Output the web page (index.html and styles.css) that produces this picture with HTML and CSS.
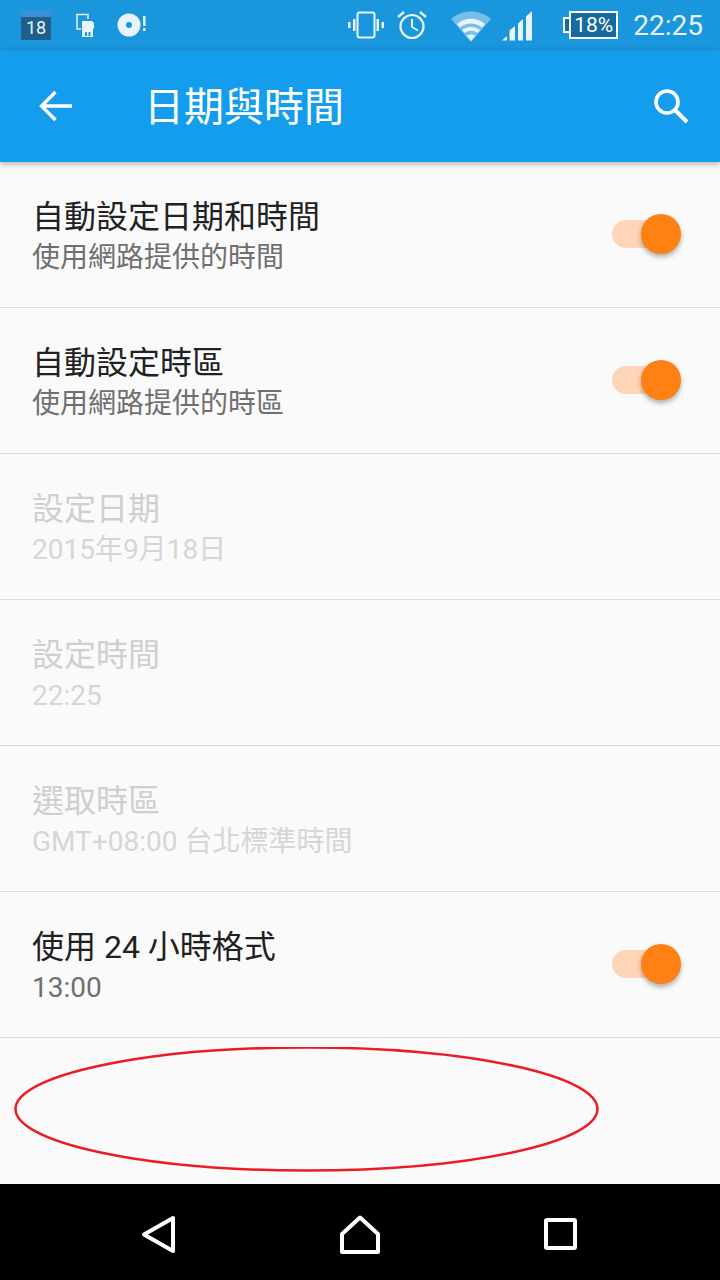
FILE: index.html
```html
<!DOCTYPE html>
<html>
	<head>
		<meta charset="UTF-8">
		<title>日期與時間</title>
		<link rel="stylesheet" href="styles.css">
	</head>
	<body>
		<div id="phone">
			<div class="status">
				<div class="status-left">
					<div class="cal"><span>18</span></div>
					<svg class="ic-sd" width="20" height="26" viewBox="0 0 20 26">
						<path d="M1 14V2.500h11V7" fill="none" stroke="#e8f4fc" stroke-width="1.500"/>
						<path d="M1 14v3h4" fill="none" stroke="#e8f4fc" stroke-width="1.500"/>
						<path d="M6 9h10l2 2v5l-1 1v8H6z" fill="#e8f4fc"/>
						<path d="M9 20h2v4H9zM12.500 20h2v4h-2z" fill="#1a96dd"/>
					</svg>
					<svg class="ic-disc" width="30" height="24" viewBox="0 0 30 24">
						<circle cx="12" cy="12" r="11.500" fill="#e8f4fc"/>
						<circle cx="12" cy="12" r="3" fill="#1a96dd"/>
						<path d="M26 3h2.500v10H26zM26 15h2.500v3H26z" fill="#e8f4fc"/>
					</svg>
				</div>
				<div class="status-right">
					<svg width="36" height="28" viewBox="0 0 36 28">
						<rect x="9.500" y="1.500" width="17" height="25" rx="2" fill="none" stroke="#e8f4fc" stroke-width="2"/>
						<path d="M5 8h2.500v12H5zM0 11h2.500v6H0zM28.500 8H31v12h-2.500zM33.500 11H36v6h-2.500z" fill="#e8f4fc"/>
					</svg>
					<svg class="ic-alarm" width="30" height="30" viewBox="0 0 30 30">
						<circle cx="15" cy="16.500" r="11.500" fill="none" stroke="#e8f4fc" stroke-width="2.200"/>
						<path d="M15 9v8l6 3.500" fill="none" stroke="#e8f4fc" stroke-width="2"/>
						<path d="M1 7l6-5M29 7l-6-5" fill="none" stroke="#e8f4fc" stroke-width="2.400"/>
					</svg>
					<svg class="ic-wifi" width="40" height="33" viewBox="0 0 40 33">
						<path d="M0 10C11 0 29 0 40 10L20 33z" fill="#76bfec"/>
						<path d="M6 15C14 8 26 8 34 15l-3 3.500C24 13 16 13 9 18.500z" fill="#e8f4fc"/>
						<path d="M11 21c5-4 13-4 18 0l-2.500 3c-4-3-9-3-13 0z" fill="#e8f4fc"/>
						<path d="M15.500 26.500c3-1.500 6-1.500 9 0L20 32z" fill="#e8f4fc"/>
					</svg>
					<svg class="ic-signal" width="30" height="30" viewBox="0 0 30 30">
						<path d="M0 29.500L5 25v4.500zM7.500 29.500V19.500L13 15v14.500zM16 29.500V12.500L21 8v21.500zM24 29.500V5.500L30 0v29.500z" fill="#e8f4fc"/>
					</svg>
					<div class="battery">
						<div class="batt-cap"></div>
						<div class="batt-body">18%</div>
					</div>
					<div class="clock">22:25</div>
				</div>
			</div>

			<div class="toolbar">
				<svg class="ic-back" width="34" height="32" viewBox="0 0 34 32">
					<path d="M2 16h31M16.500 2L2.500 16l14 14" fill="none" stroke="#fff" stroke-width="3.400"/>
				</svg>
				<div class="title">日期與時間</div>
				<svg class="ic-search" width="36" height="36" viewBox="0 0 36 36">
					<circle cx="14" cy="14" r="11" fill="none" stroke="#fff" stroke-width="3.600"/>
					<path d="M22 22l12 12" fill="none" stroke="#fff" stroke-width="4"/>
				</svg>
			</div>

			<div class="list">
				<div class="row">
					<div class="text">
						<div class="label">自動設定日期和時間</div>
						<div class="sub">使用網路提供的時間</div>
					</div>
					<div class="switch"><div class="track"></div><div class="thumb"></div></div>
				</div>
				<div class="row">
					<div class="text">
						<div class="label">自動設定時區</div>
						<div class="sub">使用網路提供的時區</div>
					</div>
					<div class="switch"><div class="track"></div><div class="thumb"></div></div>
				</div>
				<div class="row off">
					<div class="text">
						<div class="label">設定日期</div>
						<div class="sub">2015年9月18日</div>
					</div>
				</div>
				<div class="row off">
					<div class="text">
						<div class="label">設定時間</div>
						<div class="sub">22:25</div>
					</div>
				</div>
				<div class="row off">
					<div class="text">
						<div class="label">選取時區</div>
						<div class="sub">GMT+08:00 台北標準時間</div>
					</div>
				</div>
				<div class="row">
					<div class="text">
						<div class="label">使用 24 小時格式</div>
						<div class="sub">13:00</div>
					</div>
					<div class="switch"><div class="track"></div><div class="thumb"></div></div>
				</div>
				<div class="empty"></div>
			</div>

			<div class="navbar">
				<svg width="36" height="40" viewBox="0 0 36 40">
					<path d="M3 19.500L32 3v33z" fill="none" stroke="#fff" stroke-width="4" stroke-linejoin="round"/>
				</svg>
				<svg width="40" height="40" viewBox="0 0 40 40">
					<path d="M20 2.500L38 19v18H2V19z" fill="none" stroke="#fff" stroke-width="4" stroke-linejoin="round"/>
				</svg>
				<svg width="36" height="36" viewBox="0 0 36 36">
					<rect x="3" y="3" width="29" height="28" rx="1" fill="none" stroke="#fff" stroke-width="4"/>
				</svg>
			</div>

			<svg class="circle" width="590" height="130" viewBox="0 0 590 130">
				<ellipse cx="292.500" cy="62" rx="291" ry="61.500" fill="none" stroke="#ed1c24" stroke-width="2.500"/>
			</svg>
		</div>
	</body>
</html>
```

FILE: styles.css
```css
*{
	margin: 0;
	padding: 0;
	box-sizing: border-box;
}
body{
	background-color: #fafafa;
	font-family: Roboto, "Noto Sans CJK TC", sans-serif;
}
#phone{
	width: 720px;
	height: 1280px;
	position: relative;
	overflow: hidden;
	display: flex;
	flex-direction: column;
}
.status{
	height: 50px;
	background-color: #1a96dd;
	display: flex;
	justify-content: space-between;
	align-items: center;
	padding: 0 16px 0 21px;
}
.status-left{
	display: flex;
	align-items: center;
}
.status-right{
	display: flex;
	align-items: center;
}
.cal{
	width: 30px;
	height: 30px;
	background-color: #3b8fd6;
	border-bottom: 1px solid #1f5f8f;
	padding-top: 7px;
	margin-right: 25px;
}
.cal span{
	display: block;
	height: 22px;
	background-color: #1f5f8b;
	color: #e8f4fc;
	font-size: 18px;
	line-height: 22px;
	text-align: center;
}
.ic-sd{
	margin-right: 21px;
}
.ic-alarm{
	margin-left: 13px;
}
.ic-wifi{
	margin-left: 24px;
}
.ic-signal{
	margin-left: 11px;
	margin-top: 2px;
}
.battery{
	display: flex;
	align-items: center;
	margin-left: 31px;
}
.batt-cap{
	width: 6px;
	height: 16px;
	background-color: #176a9f;
	border: 2px solid #fff;
	border-right: none;
}
.batt-body{
	width: 49px;
	height: 28px;
	background-color: #176a9f;
	border: 2px solid #fff;
	color: #fff;
	font-size: 21px;
	line-height: 24px;
	text-align: center;
}
.clock{
	color: #e8f4fc;
	font-size: 28px;
	margin-left: 15px;
	margin-right: 1px;
}
.toolbar{
	height: 112px;
	background-color: #159ded;
	display: flex;
	align-items: center;
	padding: 0 31px 0 39px;
	box-shadow: 0 2px 6px rgba(0,0,0,0.3);
	position: relative;
}
.title{
	flex: 1;
	color: #fff;
	font-size: 40px;
	line-height: 56px;
	margin-left: 71px;
	padding-top: 4px;
}
.list{
	flex: 1;
	display: flex;
	flex-direction: column;
}
.row{
	height: 146px;
	border-bottom: 1px solid #dcdcdc;
	display: flex;
	justify-content: space-between;
	align-items: center;
	padding: 0 39px 0 32px;
}
.text{
	padding-top: 6px;
}
.label{
	color: #212121;
	font-size: 32px;
	line-height: 40px;
}
.sub{
	color: #6f6f6f;
	font-size: 28px;
	line-height: 40px;
	margin-top: 1px;
}
.off .label{
	color: #cfcfcf;
}
.off .sub{
	color: #d6d6d6;
}
.switch{
	width: 69px;
	height: 40px;
	margin-bottom: 2px;
	position: relative;
}
.track{
	width: 68px;
	height: 28px;
	margin-top: 6px;
	border-radius: 14px;
	background-color: #fed5b8;
}
.thumb{
	width: 40px;
	height: 40px;
	border-radius: 50%;
	background-color: #ff8013;
	box-shadow: 0 3px 5px rgba(0,0,0,0.3);
	position: absolute;
	top: 0;
	right: 0;
}
.empty{
	flex: 1;
}
.navbar{
	height: 96px;
	background-color: #000;
	display: flex;
	justify-content: space-between;
	align-items: center;
	padding: 6px 141px 0;
}
.circle{
	position: absolute;
	left: 14px;
	top: 1047px;
}
```
